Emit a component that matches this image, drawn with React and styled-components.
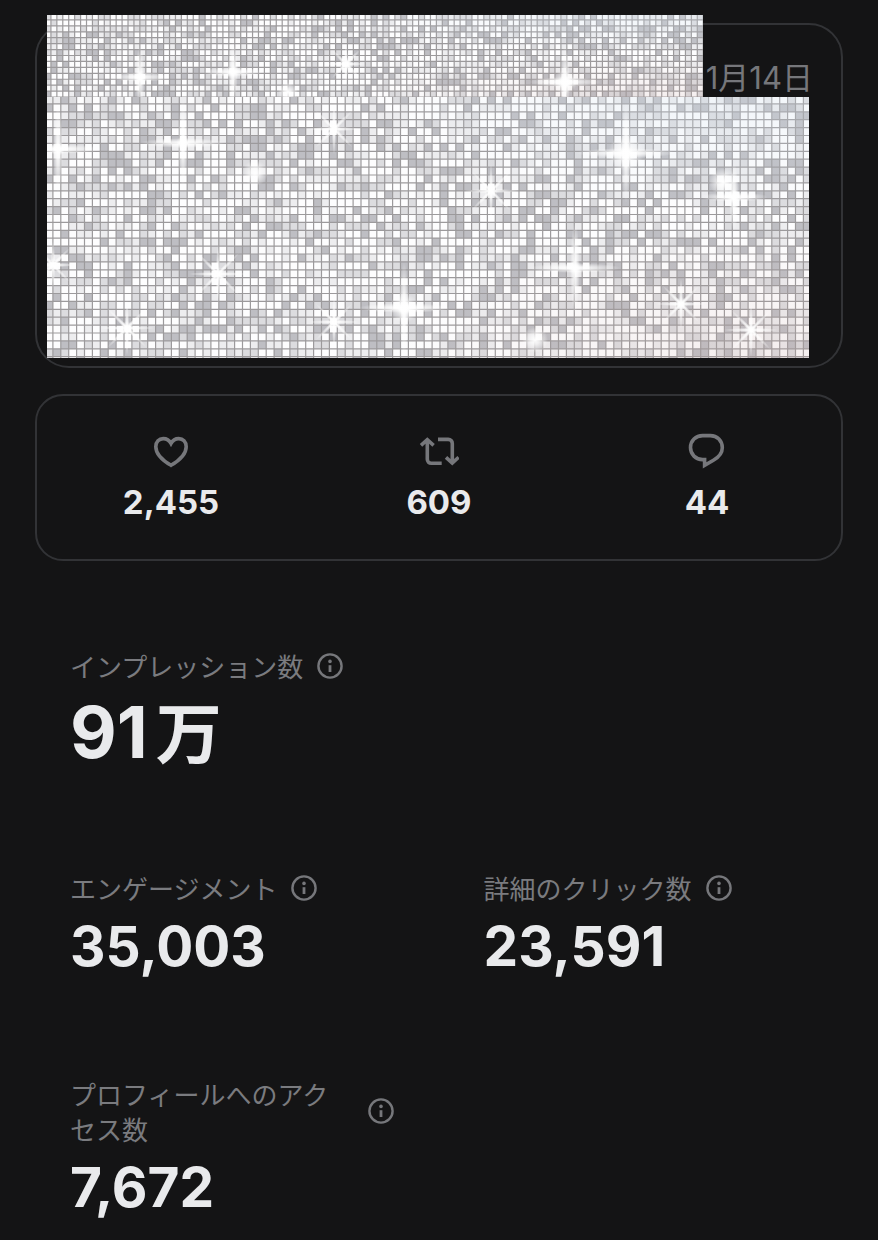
import React from "react";
import styled, { createGlobalStyle } from "styled-components";

const GlobalStyle = createGlobalStyle`
  * {
    box-sizing: border-box;
  }
  body {
    margin: 0;
    background: #141415;
    color: #e9eaec;
    font-family: Inter, "Noto Sans CJK JP", sans-serif;
  }
`;

//small seeded generator, keeps the glitter the same on every render
const makeRandom = (seed) => () => {
  seed = (seed + 0x6d2b79f5) | 0;
  let t = Math.imul(seed ^ (seed >>> 15), 1 | seed);
  t = (t + Math.imul(t ^ (t >>> 7), 61 | t)) ^ t;
  return ((t ^ (t >>> 14)) >>> 0) / 4294967296;
};

const makeTiles = (width, height, pitch, seed) => {
  const random = makeRandom(seed);
  const size = (pitch - 1.2).toFixed(2);
  const shades = { white: "", light: "", pale: "", grey: "" };
  for (let y = -0.4; y < height; y += pitch) {
    for (let x = -1.4; x < width; x += pitch) {
      const r = random();
      const shade =
        r < 0.44 ? "white" : r < 0.63 ? "pale" : r < 0.82 ? "light" : "grey";
      shades[shade] += `M${x.toFixed(2)} ${y.toFixed(2)}h${size}v${size}h-${size}z`;
    }
  }
  return shades;
};

//x, y, size
const topSparkles = {
  crosses: [[93, 62, 30], [186, 57, 30], [518, 67, 36]],
  stars: [[299, 49, 20]],
  glows: [[241, 77, 10], [518, 67, 12]],
};

const bodySparkles = {
  crosses: [
    [11, 52, 44],
    [136, 46, 44],
    [579, 56, 50],
    [687, 100, 34],
    [357, 211, 46],
    [528, 171, 46],
  ],
  stars: [
    [287, 32, 26],
    [444, 94, 28],
    [6, 168, 24],
    [171, 177, 30],
    [80, 231, 28],
    [287, 225, 26],
    [634, 207, 26],
    [704, 233, 28],
  ],
  glows: [[208, 76, 13], [676, 85, 14], [579, 56, 18], [357, 211, 15], [488, 243, 13]],
};

const Glitter = ({ id, width, height, pitch, seed, sparkles }) => {
  const tiles = makeTiles(width, height, pitch, seed);
  return (
    <GlitterSvg
      viewBox={`0 0 ${width} ${height}`}
      preserveAspectRatio="xMinYMin slice"
      aria-hidden="true"
    >
      <defs>
        <radialGradient id={`${id}-glow`}>
          <stop offset="0" stopColor="#fff" />
          <stop offset="0.35" stopColor="#fff" stopOpacity="0.75" />
          <stop offset="1" stopColor="#fff" stopOpacity="0" />
        </radialGradient>
        <radialGradient id={`${id}-cool`} cx="0.88" cy="0" r="0.45">
          <stop offset="0" stopColor="#d4e2ee" stopOpacity="0.3" />
          <stop offset="1" stopColor="#d4e2ee" stopOpacity="0" />
        </radialGradient>
        <radialGradient id={`${id}-warm`} cx="0.95" cy="1" r="0.5">
          <stop offset="0" stopColor="#c9a5a0" stopOpacity="0.17" />
          <stop offset="1" stopColor="#c9a5a0" stopOpacity="0" />
        </radialGradient>
      </defs>
      <rect width={width} height={height} fill="#9c9a9c" />
      <path d={tiles.white} fill="#fdfdfe" />
      <path d={tiles.pale} fill="#ededef" />
      <path d={tiles.light} fill="#dcdcdf" />
      <path d={tiles.grey} fill="#bebec3" />
      <rect width={width} height={height} fill={`url(#${id}-cool)`} />
      <rect width={width} height={height} fill={`url(#${id}-warm)`} />
      {sparkles.glows.map(([x, y, r]) => (
        <circle key={`${x}-${y}`} cx={x} cy={y} r={r} fill={`url(#${id}-glow)`} />
      ))}
      {sparkles.crosses.map(([x, y, r]) => (
        <g key={`${x}-${y}`} fill={`url(#${id}-glow)`}>
          <ellipse cx={x} cy={y} rx={r} ry="5" />
          <ellipse cx={x} cy={y} rx="5" ry={r} />
          <circle cx={x} cy={y} r="7" />
        </g>
      ))}
      {sparkles.stars.map(([x, y, r]) => (
        <g key={`${x}-${y}`} fill={`url(#${id}-glow)`}>
          {[0, 45, 90, 135].map((angle) => (
            <ellipse
              key={angle}
              cx={x}
              cy={y}
              rx={r}
              ry="2.2"
              transform={`rotate(${angle} ${x} ${y})`}
            />
          ))}
          <circle cx={x} cy={y} r="7" />
        </g>
      ))}
    </GlitterSvg>
  );
};

const HeartIcon = () => (
  <ActionIcon viewBox="0 0 40 40" aria-hidden="true">
    <path d="M20 34.3C12 29.6 4.8 22.7 4.8 15.7C4.8 10.8 8.1 7.6 12.2 7.6C15.6 7.6 18.4 9.4 20 12.4C21.6 9.4 24.4 7.6 27.8 7.6C31.9 7.6 35.2 10.8 35.2 15.7C35.2 22.7 28 29.6 20 34.3Z" />
  </ActionIcon>
);

const RepostIcon = () => (
  <ActionIcon viewBox="0 0 40 40" aria-hidden="true">
    <path d="M2 14.4L8.3 8.7L14.6 14.4M8.3 9V28.3C8.3 30.5 10 32.3 12.3 32.3H22.7" />
    <path d="M19 8.4H29.3C31.6 8.4 33.3 10.2 33.3 12.4V32M27 26.3L33.3 32L39.6 26.3" />
  </ActionIcon>
);

const ReplyIcon = () => (
  <ActionIcon viewBox="0 0 40 40" aria-hidden="true">
    <path d="M17.6 28.6V34.3L26.4 29.3C31.8 26.2 35.3 22.4 35.3 16.8C35.3 9.9 30.2 4.6 23.4 4.6H15.6C8.7 4.6 3.5 9.9 3.5 16.6C3.5 23.4 8.7 28.6 15.6 28.6Z" />
  </ActionIcon>
);

const InfoIcon = () => (
  <svg width="26" height="26" viewBox="0 0 26 26" aria-hidden="true">
    <circle cx="13" cy="13" r="11.6" fill="none" stroke="currentColor" strokeWidth="2.4" />
    <circle cx="13" cy="8.4" r="1.8" fill="currentColor" />
    <path d="M13 12.2V19" stroke="currentColor" strokeWidth="2.8" />
  </svg>
);

const actions = [
  { label: "いいね", count: "2,455", Icon: HeartIcon },
  { label: "リポスト", count: "609", Icon: RepostIcon },
  { label: "返信", count: "44", Icon: ReplyIcon },
];

const metrics = [
  { label: "インプレッション数", value: "91", unit: "万", featured: true },
  { label: "エンゲージメント", value: "35,003" },
  { label: "詳細のクリック数", value: "23,591" },
  { label: "プロフィールへのアクセス数", value: "7,672" },
];

const App = () => {
  return (
    <>
      <GlobalStyle />
      <Page>
        <PostCard>
          <PostDate>1月14日</PostDate>
          <TopSticker>
            <Glitter id="top" width={656} height={82} pitch={5.93} seed={17} sparkles={topSparkles} />
          </TopSticker>
          <BodySticker>
            <Glitter id="body" width={763} height={261} pitch={7.9} seed={42} sparkles={bodySparkles} />
          </BodySticker>
        </PostCard>
        <ActionsCard>
          {actions.map(({ label, count, Icon }) => (
            <Action key={label} type="button" aria-label={`${label} ${count}`}>
              <Icon />
              <Count>{count}</Count>
            </Action>
          ))}
        </ActionsCard>
        <Metrics>
          {metrics.map(({ label, value, unit, featured }) => (
            <Metric key={label} $featured={featured}>
              <MetricHead>
                <MetricLabel>{label}</MetricLabel>
                <InfoButton type="button" aria-label={label}>
                  <InfoIcon />
                </InfoButton>
              </MetricHead>
              <MetricValue $featured={featured}>
                {value}
                {unit && <Unit>{unit}</Unit>}
              </MetricValue>
            </Metric>
          ))}
        </Metrics>
      </Page>
    </>
  );
};

const Page = styled.main`
  display: flex;
  flex-direction: column;
  min-height: 100vh;
  padding: 23px 35px 16px;
`;

const Card = styled.section`
  border: 2px solid #323336;
`;

const PostCard = styled(Card)`
  position: relative;
  display: flex;
  justify-content: flex-end;
  align-items: flex-start;
  min-height: 345px;
  padding: 33px 28px;
  border-radius: 34px;
`;

const PostDate = styled.time`
  color: #76777b;
  font-size: 31px;
  line-height: 40px;
`;

//the stickers lie over the post and hide its content
const TopSticker = styled.div`
  position: absolute;
  top: -10px;
  left: 10px;
  right: 138px;
  height: 82px;
`;

const BodySticker = styled.div`
  position: absolute;
  top: 72px;
  left: 10px;
  right: 32px;
  bottom: 8px;
`;

const GlitterSvg = styled.svg`
  display: block;
  width: 100%;
  height: 100%;
`;

const ActionsCard = styled(Card)`
  display: grid;
  grid-template-columns: repeat(3, 1fr);
  margin-top: 26px;
  padding: 35px 0 36px;
  border-radius: 28px;
`;

const Action = styled.button`
  display: flex;
  flex-direction: column;
  align-items: center;
  gap: 10px;
  padding: 0;
  border: none;
  background: none;
  color: inherit;
  font: inherit;
  cursor: pointer;
`;

const ActionIcon = styled.svg`
  width: 40px;
  height: 40px;
  fill: none;
  stroke: #76777b;
  stroke-width: 3.6;
`;

const Count = styled.span`
  font-size: 33px;
  font-weight: 700;
  line-height: 42px;
`;

const Metrics = styled.section`
  display: grid;
  grid-template-columns: 1fr 1fr;
  gap: 97px 90px;
  margin-top: 87px;
  padding: 0 36px 0 35px;
`;

const Metric = styled.article`
  grid-column: ${(props) => (props.$featured ? "1 / -1" : "auto")};
`;

const MetricHead = styled.div`
  display: flex;
  align-items: center;
  gap: 14px;
`;

const MetricLabel = styled.h2`
  margin: 0;
  color: #7a7b7f;
  font-family: "Noto Sans CJK JP", sans-serif;
  font-size: 26px;
  font-weight: 400;
  line-height: 35px;
`;

const InfoButton = styled.button`
  display: flex;
  flex-shrink: 0;
  padding: 0;
  border: none;
  background: none;
  color: #76777b;
  cursor: pointer;
`;

const MetricValue = styled.p`
  margin: 8px 0 0;
  font-size: ${(props) => (props.$featured ? "72px" : "55px")};
  font-weight: 700;
  line-height: ${(props) => (props.$featured ? "82px" : "66px")};
`;

const Unit = styled.span`
  margin-left: 8px;
  font-size: 66px;
  line-height: 1;
`;

export default App;
